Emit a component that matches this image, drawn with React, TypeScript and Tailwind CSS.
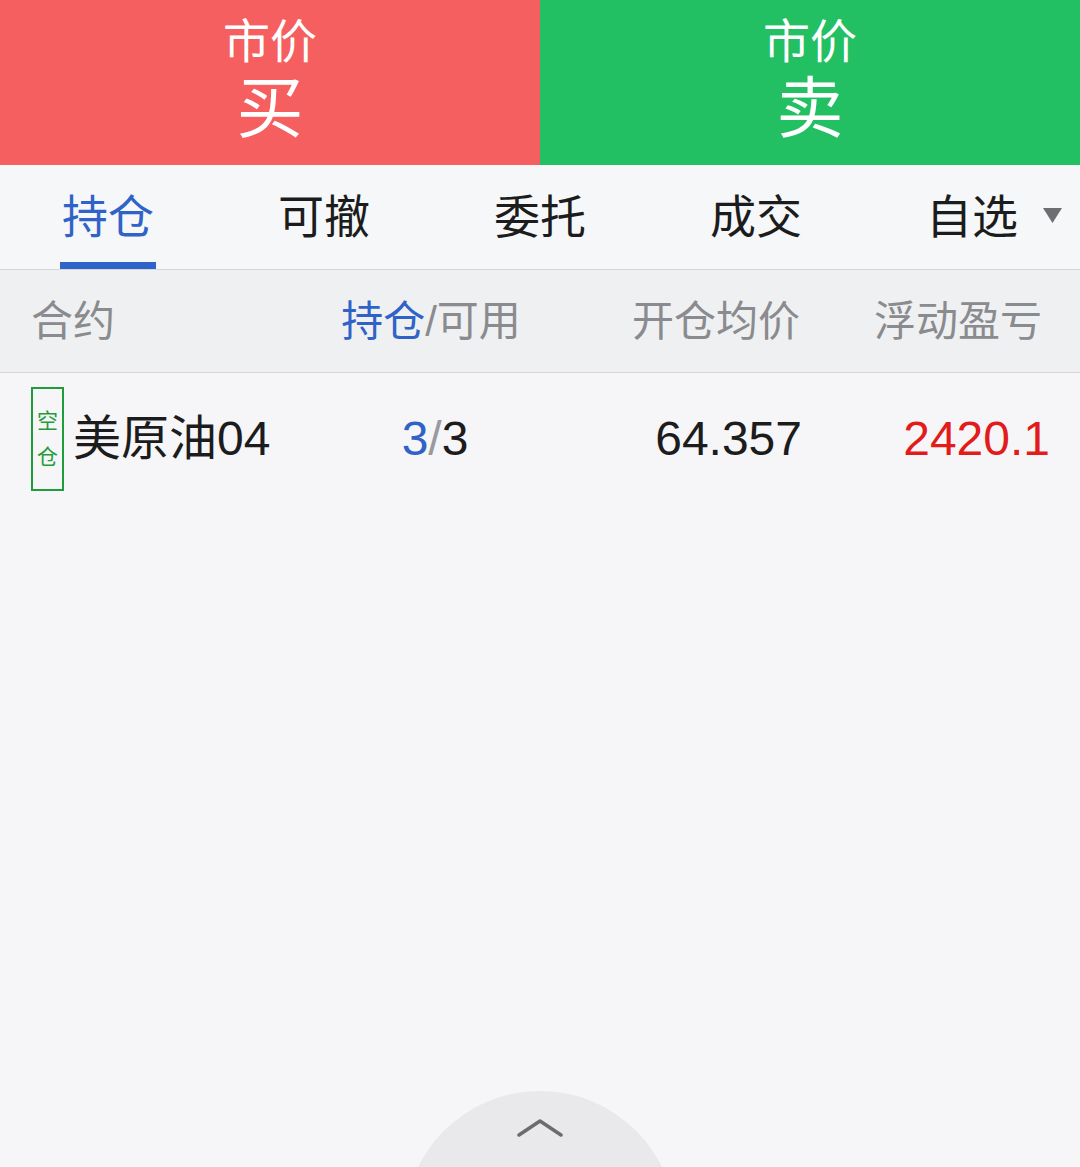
const tabs = ['持仓', '可撤', '委托', '成交', '自选'];

export default function App() {
  return (
    <div
      className="relative w-[1080px] h-[1167px] overflow-hidden bg-[#f6f6f8]"
      style={{ fontFamily: '"Liberation Sans", "Noto Sans CJK SC", sans-serif' }}
    >
      {/* buy / sell */}
      <div className="flex h-[165px]">
        <button className="flex-1 bg-[#f65f5f] text-white flex flex-col items-center pt-[12px]">
          <span className="text-[47px] leading-[60px]">市价</span>
          <span className="text-[67px] leading-[74px]">买</span>
        </button>
        <button className="flex-1 bg-[#22c063] text-white flex flex-col items-center pt-[12px]">
          <span className="text-[47px] leading-[60px]">市价</span>
          <span className="text-[67px] leading-[74px]">卖</span>
        </button>
      </div>

      {/* tabs */}
      <div className="flex h-[105px] bg-[#f6f7f8] border-b border-[#d4d6d9]">
        {tabs.map((t, i) => (
          <div key={t} className="relative flex-1 flex items-center justify-center">
            <span className={`text-[46px] ${i === 0 ? 'text-[#2f63c8]' : 'text-[#1c1c1c]'}`}>{t}</span>
            {i === 0 && <div className="absolute bottom-0 left-[60px] w-[96px] h-[7px] bg-[#2f63c8]" />}
            {i === 4 && (
              <svg className="absolute right-[18px] top-[43px]" width="19" height="15" viewBox="0 0 19 15">
                <path d="M0 0h19L9.5 15z" fill="#6d6e72" />
              </svg>
            )}
          </div>
        ))}
      </div>

      {/* header */}
      <div className="flex items-center h-[103px] bg-[#eff0f1] border-b border-[#d4d6d9] text-[42px] text-[#8a8b8f]">
        <div className="w-[320px] pl-[31px]">合约</div>
        <div className="w-[222px] text-center">
          <span className="text-[#2f63c8]">持仓</span>/可用
        </div>
        <div className="w-[258px] text-right">开仓均价</div>
        <div className="flex-1 text-right pr-[38px]">浮动盈亏</div>
      </div>

      {/* row */}
      <div className="flex items-center h-[132px] text-[48px] text-[#1c1c1c]">
        <div className="w-[320px] pl-[31px] flex items-center">
          <div className="w-[33px] h-[104px] border-2 border-[#1f9d3a] flex flex-col items-center justify-center text-[21px] leading-[36px] text-[#1f9d3a]">
            <span>空</span>
            <span>仓</span>
          </div>
          <span className="ml-[9px] text-[48px]">美原油04</span>
        </div>
        <div className="w-[230px] text-center">
          <span className="text-[#2f63c8]">3</span>
          <span className="text-[#9a9a9e]">/</span>3
        </div>
        <div className="w-[252px] text-right">64.357</div>
        <div className="flex-1 text-right pr-[30px] text-[#e21b1b]">2420.1</div>
      </div>

      {/* pull-up handle */}
      <div className="absolute left-[404px] top-[1091px] w-[272px] h-[272px] rounded-full bg-[#e9e9eb] flex justify-center pt-[27px]">
        <svg width="46" height="20" viewBox="0 0 46 20">
          <path d="M2 17 23 3l21 14" fill="none" stroke="#6b6b70" strokeWidth="3.5" strokeLinecap="round" strokeLinejoin="round" />
        </svg>
      </div>
    </div>
  );
}
